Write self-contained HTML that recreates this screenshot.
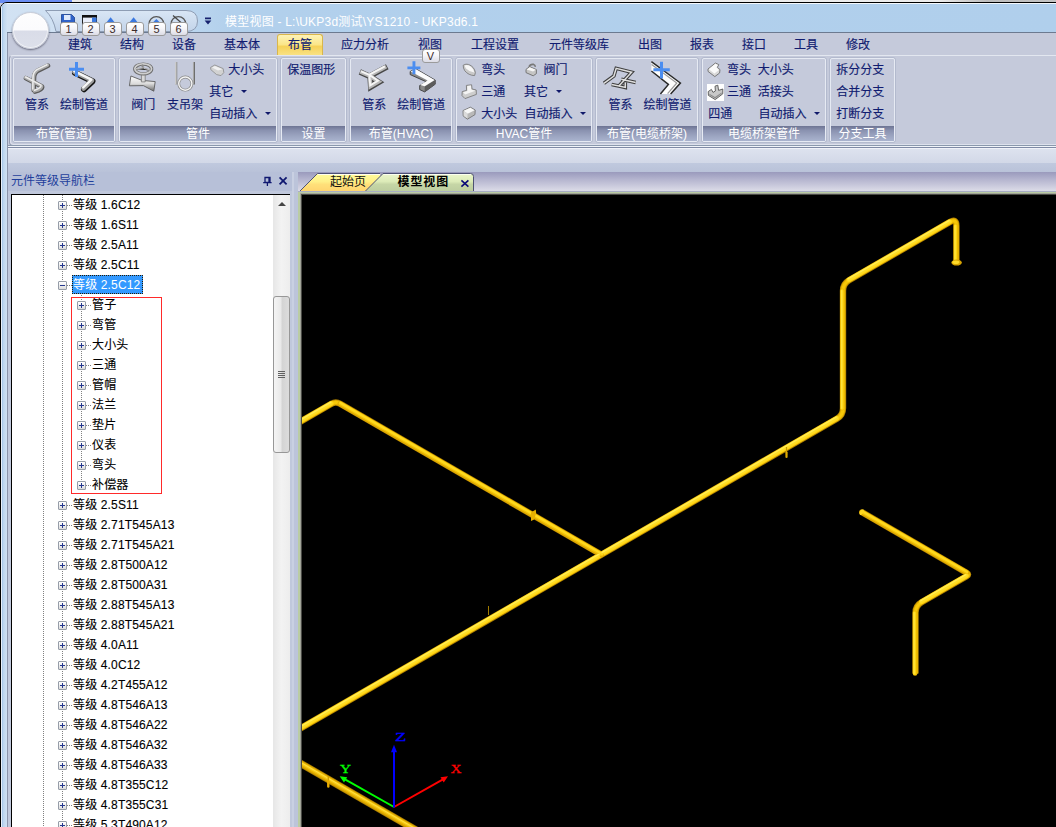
<!DOCTYPE html>
<html lang="zh-CN">
<head>
<meta charset="utf-8">
<title>模型视图 - L:\UKP3d测试\YS1210 - UKP3d6.1</title>
<style>
*{box-sizing:border-box;margin:0;padding:0}
html,body{width:1056px;height:827px;overflow:hidden}
body{position:relative;background:#c5cadb;font-family:"Liberation Sans","Noto Sans CJK SC",sans-serif;font-size:12px;color:#15206b;line-height:1}
.abs{position:absolute}
/* ---------- window chrome ---------- */
#topstripL{left:0;top:0;width:72px;height:3px;background:#6a8df2}
#topstripR{left:72px;top:0;width:984px;height:3px;background:linear-gradient(90deg,#e9e9e9 0,#ececec 88%,#bdbdbd 93%,#c4c4c4 100%)}
#win{left:0;top:2px;width:1070px;height:840px;border:1px solid #000;border-radius:7px 0 0 0;background:#c5cadb;overflow:hidden}
#title{left:0;top:0;width:1070px;height:29px;border-top:1px solid #f4f8fc;background:linear-gradient(90deg,#d2e2f3 0,#cbdef2 120px,#b2d0ec 230px,#b0cfec 100%)}
#titleline{left:0;top:29px;width:1070px;height:1px;background:#6c7a90}
#lb1{left:0;top:0;width:2px;height:840px;background:linear-gradient(90deg,#e8f0fa 0,#e8f0fa 1px,#a9c8e8 1px)}
#lb2{left:2px;top:0;width:4px;height:840px;background:linear-gradient(90deg,#bcd5ee,#d0e1f3)}
#lb3{left:6px;top:30px;width:1px;height:810px;background:#8c96ac}
#ttext{left:225px;top:16px;color:#fff;font-size:12px;white-space:nowrap;letter-spacing:.22px}
/* ---------- ribbon tabs ---------- */
#tabrow{left:8px;top:33px;width:1049px;height:22px;background:#c5cadb}
.rt{position:absolute;top:39px;height:14px;font-size:12px;white-space:nowrap;transform:translateX(-50%);color:#111c70;-webkit-text-stroke:.15px #111c70}
#acttab{left:277px;top:34px;width:46px;height:22px;border:1px solid #d9b64b;border-bottom:none;border-radius:3px 3px 0 0;background:linear-gradient(180deg,#fdf3b7 0,#fbe68a 45%,#f6d259 55%,#f9e388 100%)}
/* ---------- ribbon body ---------- */
#ribframe{left:9px;top:55px;width:1060px;height:91px;border:1px solid #949cb2;border-top-color:#e3e7f0;border-radius:4px 0 0 4px;background:#c5cadb;box-shadow:inset 1px -1px 0 #dde1ec}
#ribline1{left:7px;top:145px;width:1049px;height:1px;background:#8a98ac}
.grp{position:absolute;top:57px;height:86px;border:1px solid #b3bace;border-radius:3px;background:#c5cadb}
.grp:before{content:"";position:absolute;left:0;top:0;right:0;bottom:0;border:1px solid #e6eaf3;border-radius:2px}
.grp .cap{position:absolute;left:1px;right:1px;bottom:1px;height:15px;background:linear-gradient(180deg,#6d7493 0,#8a92b0 30%,#9ba4c0 65%,#a9b3ce 100%);color:#fff;text-align:center;font-size:12px;line-height:17px;white-space:nowrap;overflow:hidden}
.lbl{position:absolute;font-size:12px;white-space:nowrap;color:#111c70;line-height:14px;-webkit-text-stroke:.15px #111c70}
.dd{position:absolute;width:0;height:0;border-left:3px solid transparent;border-right:3px solid transparent;border-top:3.5px solid #10186a}
/* ---------- band under ribbon ---------- */
#band0{left:7px;top:146px;width:1049px;height:1px;background:#f1f4f9}
#band1{left:7px;top:147px;width:1049px;height:1px;background:#7f8aa6}
#band2{left:7px;top:148px;width:1049px;height:1px;background:#f0f2f8}
#band3{left:7px;top:149px;width:1049px;height:14px;background:linear-gradient(180deg,#dde2ee,#d2d8e7)}
#band4{left:7px;top:163px;width:1049px;height:9px;background:linear-gradient(180deg,#c0c9de,#b9c2d9)}
/* ---------- left panel ---------- */
#lpbg{left:7px;top:172px;width:291px;height:660px;background:linear-gradient(90deg,#c0c8dc 0,#c0c8dc 285px,#c9d0e2 285px,#c9d0e2 287px,#bcc4da 287px)}
#phead{left:8px;top:172px;width:284px;height:19px;background:#b7c0d8;color:#1f3f9c;font-size:12px;line-height:19px;padding-left:3px;white-space:nowrap}
#tree{left:11px;top:194px;width:279px;height:640px;background:#fff;border-top:1px solid #000;border-left:1px solid #000;overflow:hidden;color:#000}
.row{position:absolute;height:20px;line-height:20px;font-size:12px;white-space:nowrap;color:#000;letter-spacing:.15px;-webkit-text-stroke:.12px #000}
.pm{position:absolute;width:9px;height:9px;border:1px solid #969da8;border-radius:1px;background:linear-gradient(180deg,#fff,#dcdcdc)}
.pm:before{content:"";position:absolute;left:1px;top:3px;width:5px;height:1px;background:#24388f}
.pm.plus:after{content:"";position:absolute;left:3px;top:1px;width:1px;height:5px;background:#24388f}
.vdot{position:absolute;width:1px;background-image:linear-gradient(180deg,#808080 50%,transparent 50%);background-size:1px 2px}
.hdot{position:absolute;height:1px;background-image:linear-gradient(90deg,#808080 50%,transparent 50%);background-size:2px 1px}
.sel{position:absolute;width:71px;height:19px;background:#3399ff;border:1px dotted #2a1a00}
.selt{color:#fff;-webkit-text-stroke:0 transparent}
.redbox{position:absolute;width:91px;height:197px;border:1px solid #ff2a2a}
#sb{position:absolute;left:261px;top:0;width:17px;height:640px;background:linear-gradient(90deg,#e6e6e6,#f3f3f3 50%,#ededed)}
#sbup{position:absolute;left:5px;top:7px;width:0;height:0;border-left:4px solid transparent;border-right:4px solid transparent;border-bottom:4px solid #444}
#sbthumb{position:absolute;left:0;top:101px;width:17px;height:157px;border:1px solid #979797;border-radius:3px;background:linear-gradient(90deg,#f4f4f4 0,#e9e9e9 45%,#d4d4d4 55%,#dcdcdc 100%)}
#sbthumb i{position:absolute;left:4px;top:74px;width:7px;height:7px;background:linear-gradient(180deg,#606060 0,#606060 1px,transparent 1px,transparent 2px,#606060 2px,#606060 3px,transparent 3px,transparent 4px,#606060 4px,#606060 5px,transparent 5px,transparent 6px,#606060 6px)}
#orb{left:12px;top:12px;width:37px;height:37px;border-radius:50%;background:linear-gradient(180deg,#fdfdfe 0,#fbfbfd 49%,#d9dce8 51%,#dde0ea 100%);border:1px solid #c9cdd8;box-shadow:0 1px 2px rgba(70,70,90,.75),0 0 0 1px rgba(255,255,255,.6) inset}
.kt{position:absolute;width:18px;height:14px;border:1px solid #9b9b9b;border-radius:3px;background:linear-gradient(180deg,#ffffff 0,#f6f6f9 45%,#dcdce6 100%);color:#3c2a2a;font-size:11px;line-height:12px;text-align:center}
.dtab{font-size:12px;line-height:15px;color:#111;white-space:nowrap}
/* ---------- doc area ---------- */
#tabstrip{left:298px;top:172px;width:760px;height:19px;background:linear-gradient(180deg,#9a9abc 0,#b5b5cf 40%,#dcdce8 100%)}
#docborder{left:298px;top:191px;width:760px;height:640px;background:#bacca3;border-top:1px solid #a9aec4}
#viewb{left:300px;top:193px;width:760px;height:640px;background:#a2a498}
#view{left:301px;top:194px;width:760px;height:640px;background:#000;border-left:1px solid #4a4b46;border-top:1px solid #4a4b46}
</style>
</head>
<body>
<div class="abs" id="topstripL"></div>
<div class="abs" id="topstripR"></div>
<div class="abs" id="win">
  <div class="abs" id="title"></div>
  <div class="abs" id="titleline"></div>
  <div class="abs" id="lb1"></div>
  <div class="abs" id="lb2"></div>
  <div class="abs" id="lb3"></div>
</div>
<div class="abs" id="ttext">模型视图 - L:\UKP3d测试\YS1210 - UKP3d6.1</div>

<!-- RIBBON TABS -->
<div class="abs" id="tabrow"></div>
<div class="abs" id="acttab"></div>
<div class="rt" style="left:80px">建筑</div>
<div class="rt" style="left:132px">结构</div>
<div class="rt" style="left:184px">设备</div>
<div class="rt" style="left:242px">基本体</div>
<div class="rt" style="left:300px">布管</div>
<div class="rt" style="left:365px">应力分析</div>
<div class="rt" style="left:430px">视图</div>
<div class="rt" style="left:495px">工程设置</div>
<div class="rt" style="left:579px">元件等级库</div>
<div class="rt" style="left:650px">出图</div>
<div class="rt" style="left:702px">报表</div>
<div class="rt" style="left:754px">接口</div>
<div class="rt" style="left:806px">工具</div>
<div class="rt" style="left:858px">修改</div>

<!-- RIBBON BODY -->
<div class="abs" id="ribframe"></div>
<div class="grp" style="left:12px;width:104px"><div class="cap">布管(管道)</div></div>
<div class="grp" style="left:118px;width:160px"><div class="cap">管件</div></div>
<div class="grp" style="left:280px;width:67px"><div class="cap">设置</div></div>
<div class="grp" style="left:349px;width:104px"><div class="cap">布管(HVAC)</div></div>
<div class="grp" style="left:455px;width:138px"><div class="cap">HVAC管件</div></div>
<div class="grp" style="left:595px;width:104px"><div class="cap">布管(电缆桥架)</div></div>
<div class="grp" style="left:701px;width:126px"><div class="cap">电缆桥架管件</div></div>
<div class="grp" style="left:829px;width:67px"><div class="cap">分支工具</div></div>
<div class="lbl" style="left:37.0px;top:97.6px;transform:translateX(-50%)">管系</div>
<div class="lbl" style="left:84.0px;top:97.6px;transform:translateX(-50%)">绘制管道</div>
<svg class="abs" style="left:22px;top:60px" width="30" height="34" viewBox="0 0 30 34"><g fill="none" stroke-linecap="round" stroke-linejoin="round"><path d="M25.5 5.2 L15.5 10 Q11.5 12.5 11.5 17.5 L11.2 29.5 M3.5 17.6 L19.5 26 Q20.5 28.5 12.5 31" stroke="#5a5a5a" stroke-width="4.6" transform="translate(.5 .6)"/><path d="M25.5 5.2 L15.5 10 Q11.5 12.5 11.5 17.5 L11.2 29.5 M3.5 17.6 L19.5 26 Q20.5 28.5 12.5 31" stroke="#ababab" stroke-width="3.4"/><path d="M25 4.8 L15 9.6 Q11 12.2 11 17.2 L10.8 29 M3.6 17 L19 25.2 Q19.8 27.6 12.6 30.2" stroke="#ececec" stroke-width="1.5"/></g></svg>
<svg class="abs" style="left:66px;top:60px" width="34" height="34" viewBox="0 0 34 34"><g fill="none" stroke-linecap="round" stroke-linejoin="round"><path d="M8.5 12 L26 20.5 L17.5 28.5" stroke="#141414" stroke-width="6" transform="translate(.5 .7)"/><path d="M8.5 12 L26 20.5 L17.5 28.5" stroke="#9c9c9c" stroke-width="4.6"/><path d="M8.3 11.2 L25.4 19.6 L17.2 27.4" stroke="#f6f6f6" stroke-width="2.4"/></g><path d="M3 7.8h15v3h-15z M9 2h3v15h-3z" fill="#4b8df0"/></svg>
<div class="lbl" style="left:143.2px;top:97.6px;transform:translateX(-50%)">阀门</div>
<div class="lbl" style="left:185.0px;top:97.6px;transform:translateX(-50%)">支吊架</div>
<svg class="abs" style="left:127px;top:60px" width="32" height="34" viewBox="0 0 32 34"><defs><linearGradient id="vg" x1="0" y1="0" x2="0" y2="1"><stop offset="0" stop-color="#ffffff"/><stop offset=".5" stop-color="#dcdcdc"/><stop offset="1" stop-color="#6c6c6c"/></linearGradient></defs><path d="M3.9 16 L15.2 20.4 L28.2 21.6 L26.8 31.2 L16.4 25.6 L2.4 25.8 Z" fill="url(#vg)" stroke="#5e5e5e" stroke-width=".9"/><path d="M14.4 13.5 v8.4 h3.8 v-8.4z" fill="#d9d9d9" stroke="#6a6a6a" stroke-width=".7"/><ellipse cx="16.2" cy="9" rx="8.4" ry="4.9" fill="none" stroke="#6f6f6f" stroke-width="3.4"/><ellipse cx="16.2" cy="8.7" rx="8.4" ry="4.9" fill="none" stroke="#cfcfcf" stroke-width="1.7"/><path d="M9 9 L16.2 8.4 L23.4 10.4 M16.2 8.4 L15 4.6" stroke="#8a8a8a" stroke-width="2"/><path d="M9 8.7 L16.2 8.1 L23.4 10.1" stroke="#dedede" stroke-width=".8"/></svg>
<svg class="abs" style="left:172px;top:60px" width="28" height="34" viewBox="0 0 28 34"><path d="M4.2 2 V24.5" stroke="#8c8c8c" stroke-width="2.2" fill="none"/><path d="M3.8 2 V24.5" stroke="#e4e4e4" stroke-width="1" fill="none"/><path d="M22 2 V24.5" stroke="#6e6e6e" stroke-width="2" fill="none"/><path d="M21.4 2 V24.5" stroke="#bdbdbd" stroke-width=".8" fill="none"/><circle cx="13.3" cy="23.6" r="6.6" fill="none" stroke="#8a8a8a" stroke-width="2.8"/><circle cx="13.3" cy="23.6" r="6.6" fill="none" stroke="#f4f4f4" stroke-width="1.4"/></svg>
<svg class="abs" style="left:209px;top:63px" width="17" height="15" viewBox="0 0 17 15"><path d="M1.6 4.4 L5.8 2 L14.2 5.6 L14.8 9.6 L12 12.6 L7.6 11.6 L1.8 6.6Z" fill="#d2d2d2" stroke="#8b8b8b" stroke-width=".8"/><path d="M3 4.6 L6 3 L13.4 6.2 L9 7.4Z" fill="#f1f1f1"/></svg>
<div class="lbl" style="left:228.2px;top:63.4px">大小头</div>
<div class="lbl" style="left:209.2px;top:85.2px">其它</div>
<div class="dd" style="left:241.0px;top:90.1px"></div>
<div class="lbl" style="left:209.2px;top:107.2px">自动插入</div>
<div class="dd" style="left:264.8px;top:112.1px"></div>
<div class="lbl" style="left:287.3px;top:63.4px">保温图形</div>
<div class="lbl" style="left:374.2px;top:97.6px;transform:translateX(-50%)">管系</div>
<div class="lbl" style="left:421.2px;top:97.6px;transform:translateX(-50%)">绘制管道</div>
<svg class="abs" style="left:357px;top:60px" width="34" height="34" viewBox="0 0 34 34"><g fill="none" stroke-linecap="square" stroke-linejoin="miter"><path d="M27.4 7.4 L13 15.2 M5 12.4 L13 16 L21.6 21.6 L13.4 26.4 L12.8 16.4" stroke="#484848" stroke-width="5.6" transform="translate(.4 .6)"/><path d="M27.4 7.4 L13 15.2 M5 12.4 L13 16 L21.6 21.6 L13.4 26.4 L12.8 16.4" stroke="#b8b8b8" stroke-width="4"/><path d="M27 6.8 L12.8 14.4 M5 11.8 L12.8 15.2 L21 20.8 L13.2 25.4 L12.4 15.8" stroke="#f5f5f5" stroke-width="1.9"/></g></svg>
<svg class="abs" style="left:404px;top:60px" width="36" height="34" viewBox="0 0 36 34"><path d="M6.2 11.5 L11.6 8.7 L31.2 20.1 L31.2 24.2 L20.7 31.9 L15.7 29.6 L15.7 25.5 L22.5 21.9 L6.2 14.6Z" fill="#8a8a8a" stroke="#3a3a3a" stroke-width=".9"/><path d="M20.7 26.5 L31.2 20.1 L31.2 24.2 L20.7 31.9Z" fill="#5c5c5c"/><path d="M6.6 11.6 L11.6 9.1 L30.6 20.1 L20.7 26.2 L16.2 24.9 L23.6 20.6Z" fill="#fcfcfc"/><path d="M3.4 6.4h13v2.8h-13z M8.5 1.2h2.9v13h-2.9z" fill="#4b8df0"/></svg>
<svg class="abs" style="left:462px;top:63px" width="16" height="15" viewBox="0 0 16 15"><path d="M1.2 2.2 Q4 .6 6.4 1.4 Q12.4 3.6 13.4 9.6 L12.6 12.6 Q6.6 12.4 2.8 7.8 Q1 5 1.2 2.2Z" fill="#c9c9c9" stroke="#7d7d7d" stroke-width=".9"/><path d="M2.4 2.6 Q5 1.6 7 2.6 Q11.6 5 12.2 9.6 Q7 8.8 4 5.6Z" fill="#f7f7f7"/></svg>
<div class="lbl" style="left:481.2px;top:63.4px">弯头</div>
<svg class="abs" style="left:524px;top:63px" width="16" height="15" viewBox="0 0 16 15"><path d="M2 6.4 L5.6 3.6 L12.4 6.6 L12.4 10.6 L9.2 12.8 L2 9.6Z" fill="#c4c4c4" stroke="#6e6e6e" stroke-width=".9"/><path d="M2.6 6.4 L5.8 4.2 L11.8 6.8 L9 8.6Z" fill="#f6f6f6"/><path d="M5 3.8 Q6 1 9.6 1.4 Q11.4 2 11.2 3.8" fill="none" stroke="#777" stroke-width="1.6"/></svg>
<div class="lbl" style="left:543.5px;top:63.4px">阀门</div>
<svg class="abs" style="left:461px;top:84px" width="18" height="16" viewBox="0 0 18 16"><path d="M5.4 1.4 L10.6 .8 L11 5 L15.2 6 L15.4 10.4 L4 14.6 L1 11.6 L1.2 7.6 L5.6 6.4Z" fill="#cdcdcd" stroke="#7c7c7c" stroke-width=".9"/><path d="M6.2 2 L10 1.6 L10.2 5.6 L14.4 6.8 L4.2 10.6 L2 8.2 L6.4 7Z" fill="#f4f4f4"/></svg>
<div class="lbl" style="left:481.2px;top:85.2px">三通</div>
<div class="lbl" style="left:524.0px;top:85.2px">其它</div>
<div class="dd" style="left:555.6px;top:90.1px"></div>
<svg class="abs" style="left:462px;top:106px" width="16" height="15" viewBox="0 0 16 15"><path d="M1 4.6 L8.4 1.2 L13.2 4 L13 8.6 L5.4 13.2 L1.2 10Z" fill="#b9b9b9" stroke="#767676" stroke-width=".9"/><path d="M1.6 4.8 L8.4 1.8 L12.6 4.2 L5.6 7.8Z" fill="#f8f8f8"/><path d="M5.6 7.8 L5.4 12.6 L1.6 9.8 L1.6 4.8Z" fill="#dcdcdc"/></svg>
<div class="lbl" style="left:481.2px;top:107.2px">大小头</div>
<div class="lbl" style="left:524.6px;top:107.2px">自动插入</div>
<div class="dd" style="left:579.6px;top:112.1px"></div>
<div class="lbl" style="left:620.4px;top:97.6px;transform:translateX(-50%)">管系</div>
<div class="lbl" style="left:667.4px;top:97.6px;transform:translateX(-50%)">绘制管道</div>
<svg class="abs" style="left:602px;top:60px" width="38" height="34" viewBox="0 0 38 34"><g fill="none" stroke-linejoin="miter" stroke-linecap="butt"><path d="M1.9 23.3 L11.9 16 L14.2 8.3 L29.6 12.2 L16.9 26 L9.6 24.6 M19.2 19.2 L33.7 22.4 M16.9 26 L23.3 27.4 L23.3 22.6" stroke="#3e3e3e" stroke-width="3.6"/><path d="M1.9 23.3 L11.9 16 L14.2 8.3 L29.6 12.2 L16.9 26 L9.6 24.6 M19.2 19.2 L33.7 22.4 M16.9 26 L23.3 27.4 L23.3 22.6" stroke="#dedede" stroke-width="1.5"/></g></svg>
<svg class="abs" style="left:648px;top:60px" width="36" height="36" viewBox="0 0 36 36"><path d="M3.4 1.6 L32.4 23 L22.6 34 L12.4 34 L20.4 24.4 L3.4 11Z" fill="#fdfdfd"/><path d="M3.4 1.6 L32.4 23 L22.6 34 M12.4 34 L20.4 24.4 L3.4 11" fill="none" stroke="#2a2a2a" stroke-width="1.5"/><path d="M3.6 4.4 L28.8 23 L19.6 33.6" fill="none" stroke="#9a9a9a" stroke-width="1.2"/><path d="M5.4 8.2h16.4v3h-16.4z M12 1.8h3v16.6h-3z" fill="#4b8df0"/></svg>
<svg class="abs" style="left:707px;top:62px" width="15" height="16" viewBox="0 0 15 16"><path d="M1 7 L8.4 1 L11.8 2.6 L10.4 5.4 L13 7.6 L12.6 11 L7.8 14.6 L1 9.4Z" fill="#d9d9d9" stroke="#6f6f6f" stroke-width=".9"/><path d="M1.8 7.2 L8.4 1.8 L10.8 3 L9.4 5.6 L12 8 L7.4 11.4Z" fill="#fafafa"/></svg>
<div class="lbl" style="left:727.0px;top:63.4px">弯头</div>
<div class="lbl" style="left:757.8px;top:63.4px">大小头</div>
<svg class="abs" style="left:707px;top:84px" width="17" height="17" viewBox="0 0 17 17"><rect x="0" y="0" width="17" height="17" fill="#fff"/><path d="M1.2 7.6 L4.4 5.4 L6 8.4 L8.4 7 L8 2.2 L10.8 1.2 L11.6 6.4 L15.8 5 L15.8 9.8 L8.2 15.6 L1.4 11.4Z" fill="#c8c8c8" stroke="#555" stroke-width=".9"/><path d="M2.4 9.8 L8 13 L14.6 8.4 L14.8 9.6 L8.2 14.4 L2.4 11Z" fill="#8a8a8a"/></svg>
<div class="lbl" style="left:727.0px;top:85.2px">三通</div>
<div class="lbl" style="left:757.8px;top:85.2px">活接头</div>
<div class="lbl" style="left:708.2px;top:107.2px">四通</div>
<div class="lbl" style="left:758.4px;top:107.2px">自动插入</div>
<div class="dd" style="left:813.6px;top:112.1px"></div>
<div class="lbl" style="left:836.2px;top:63.4px">拆分分支</div>
<div class="lbl" style="left:836.2px;top:85.2px">合并分支</div>
<div class="lbl" style="left:836.2px;top:107.2px">打断分支</div>

<div class="abs" id="ribline1"></div>
<div class="abs" id="band0"></div>
<div class="abs" id="band1"></div>
<div class="abs" id="band2"></div>
<div class="abs" id="band3"></div>
<div class="abs" id="band4"></div>

<!-- LEFT PANEL -->
<div class="abs" id="lpbg"></div>
<div class="abs" id="phead">元件等级导航栏</div>
<div class="abs" id="tree">
<div class="vdot" style="left:31px;top:0;height:640px"></div>
<div class="vdot" style="left:50px;top:0;height:640px"></div>
<div class="vdot" style="left:69px;top:100px;height:190px"></div>
<div class="hdot" style="left:55px;top:10px;width:6px"></div>
<div class="pm plus" style="left:46px;top:6px"></div>
<div class="row" style="left:61px;top:0px">等级 1.6C12</div>
<div class="hdot" style="left:55px;top:30px;width:6px"></div>
<div class="pm plus" style="left:46px;top:26px"></div>
<div class="row" style="left:61px;top:20px">等级 1.6S11</div>
<div class="hdot" style="left:55px;top:50px;width:6px"></div>
<div class="pm plus" style="left:46px;top:46px"></div>
<div class="row" style="left:61px;top:40px">等级 2.5A11</div>
<div class="hdot" style="left:55px;top:70px;width:6px"></div>
<div class="pm plus" style="left:46px;top:66px"></div>
<div class="row" style="left:61px;top:60px">等级 2.5C11</div>
<div class="hdot" style="left:55px;top:90px;width:6px"></div>
<div class="pm " style="left:46px;top:86px"></div>
<div class="sel" style="left:60px;top:80px"></div>
<div class="row selt" style="left:61px;top:80px">等级 2.5C12</div>
<div class="hdot" style="left:74px;top:110px;width:6px"></div>
<div class="pm plus" style="left:65px;top:106px"></div>
<div class="row" style="left:80px;top:100px">管子</div>
<div class="hdot" style="left:74px;top:130px;width:6px"></div>
<div class="pm plus" style="left:65px;top:126px"></div>
<div class="row" style="left:80px;top:120px">弯管</div>
<div class="hdot" style="left:74px;top:150px;width:6px"></div>
<div class="pm plus" style="left:65px;top:146px"></div>
<div class="row" style="left:80px;top:140px">大小头</div>
<div class="hdot" style="left:74px;top:170px;width:6px"></div>
<div class="pm plus" style="left:65px;top:166px"></div>
<div class="row" style="left:80px;top:160px">三通</div>
<div class="hdot" style="left:74px;top:190px;width:6px"></div>
<div class="pm plus" style="left:65px;top:186px"></div>
<div class="row" style="left:80px;top:180px">管帽</div>
<div class="hdot" style="left:74px;top:210px;width:6px"></div>
<div class="pm plus" style="left:65px;top:206px"></div>
<div class="row" style="left:80px;top:200px">法兰</div>
<div class="hdot" style="left:74px;top:230px;width:6px"></div>
<div class="pm plus" style="left:65px;top:226px"></div>
<div class="row" style="left:80px;top:220px">垫片</div>
<div class="hdot" style="left:74px;top:250px;width:6px"></div>
<div class="pm plus" style="left:65px;top:246px"></div>
<div class="row" style="left:80px;top:240px">仪表</div>
<div class="hdot" style="left:74px;top:270px;width:6px"></div>
<div class="pm plus" style="left:65px;top:266px"></div>
<div class="row" style="left:80px;top:260px">弯头</div>
<div class="hdot" style="left:74px;top:290px;width:6px"></div>
<div class="pm plus" style="left:65px;top:286px"></div>
<div class="row" style="left:80px;top:280px">补偿器</div>
<div class="hdot" style="left:55px;top:310px;width:6px"></div>
<div class="pm plus" style="left:46px;top:306px"></div>
<div class="row" style="left:61px;top:300px">等级 2.5S11</div>
<div class="hdot" style="left:55px;top:330px;width:6px"></div>
<div class="pm plus" style="left:46px;top:326px"></div>
<div class="row" style="left:61px;top:320px">等级 2.71T545A13</div>
<div class="hdot" style="left:55px;top:350px;width:6px"></div>
<div class="pm plus" style="left:46px;top:346px"></div>
<div class="row" style="left:61px;top:340px">等级 2.71T545A21</div>
<div class="hdot" style="left:55px;top:370px;width:6px"></div>
<div class="pm plus" style="left:46px;top:366px"></div>
<div class="row" style="left:61px;top:360px">等级 2.8T500A12</div>
<div class="hdot" style="left:55px;top:390px;width:6px"></div>
<div class="pm plus" style="left:46px;top:386px"></div>
<div class="row" style="left:61px;top:380px">等级 2.8T500A31</div>
<div class="hdot" style="left:55px;top:410px;width:6px"></div>
<div class="pm plus" style="left:46px;top:406px"></div>
<div class="row" style="left:61px;top:400px">等级 2.88T545A13</div>
<div class="hdot" style="left:55px;top:430px;width:6px"></div>
<div class="pm plus" style="left:46px;top:426px"></div>
<div class="row" style="left:61px;top:420px">等级 2.88T545A21</div>
<div class="hdot" style="left:55px;top:450px;width:6px"></div>
<div class="pm plus" style="left:46px;top:446px"></div>
<div class="row" style="left:61px;top:440px">等级 4.0A11</div>
<div class="hdot" style="left:55px;top:470px;width:6px"></div>
<div class="pm plus" style="left:46px;top:466px"></div>
<div class="row" style="left:61px;top:460px">等级 4.0C12</div>
<div class="hdot" style="left:55px;top:490px;width:6px"></div>
<div class="pm plus" style="left:46px;top:486px"></div>
<div class="row" style="left:61px;top:480px">等级 4.2T455A12</div>
<div class="hdot" style="left:55px;top:510px;width:6px"></div>
<div class="pm plus" style="left:46px;top:506px"></div>
<div class="row" style="left:61px;top:500px">等级 4.8T546A13</div>
<div class="hdot" style="left:55px;top:530px;width:6px"></div>
<div class="pm plus" style="left:46px;top:526px"></div>
<div class="row" style="left:61px;top:520px">等级 4.8T546A22</div>
<div class="hdot" style="left:55px;top:550px;width:6px"></div>
<div class="pm plus" style="left:46px;top:546px"></div>
<div class="row" style="left:61px;top:540px">等级 4.8T546A32</div>
<div class="hdot" style="left:55px;top:570px;width:6px"></div>
<div class="pm plus" style="left:46px;top:566px"></div>
<div class="row" style="left:61px;top:560px">等级 4.8T546A33</div>
<div class="hdot" style="left:55px;top:590px;width:6px"></div>
<div class="pm plus" style="left:46px;top:586px"></div>
<div class="row" style="left:61px;top:580px">等级 4.8T355C12</div>
<div class="hdot" style="left:55px;top:610px;width:6px"></div>
<div class="pm plus" style="left:46px;top:606px"></div>
<div class="row" style="left:61px;top:600px">等级 4.8T355C31</div>
<div class="hdot" style="left:55px;top:630px;width:6px"></div>
<div class="pm plus" style="left:46px;top:626px"></div>
<div class="row" style="left:61px;top:620px">等级 5.3T490A12</div>
<div class="redbox" style="left:59px;top:102px"></div>
<div id="sb"><div id="sbup"></div><div id="sbthumb"><i></i></div></div>
</div>

<!-- DOC AREA -->
<div class="abs" id="tabstrip"></div>
<svg class="abs" style="left:298px;top:172px" width="200" height="20" viewBox="0 0 200 20">
  <defs>
    <linearGradient id="t1" x1="0" y1="0" x2="0" y2="1"><stop offset="0" stop-color="#fffc9c"/><stop offset=".45" stop-color="#fff088"/><stop offset=".6" stop-color="#ffe07a"/><stop offset="1" stop-color="#ffd46e"/></linearGradient>
    <linearGradient id="t2" x1="0" y1="0" x2="0" y2="1"><stop offset="0" stop-color="#ecf6cc"/><stop offset=".45" stop-color="#dcebb8"/><stop offset=".6" stop-color="#c6d6a6"/><stop offset="1" stop-color="#bccd9f"/></linearGradient>
  </defs>
  <path d="M1.5 19.5 L19.5 1.5 H82 L86 19.5Z" fill="url(#t1)"/>
  <path d="M20 2.5 H82" fill="none" stroke="#fffef0" stroke-width="1"/>
  <path d="M1.5 19.5 L19.5 1.5 H82" fill="none" stroke="#4e5274" stroke-width="1"/>
  <path d="M67 19.5 L85 1.5 H172.5 Q175.5 1.5 175.5 4.5 V19.5Z" fill="url(#t2)"/>
  <path d="M85.5 2.5 H173" fill="none" stroke="#fbfff0" stroke-width="1"/>
  <path d="M67 19.5 L85 1.5 H172.5 Q175.5 1.5 175.5 4.5 V19.5" fill="none" stroke="#4e5274" stroke-width="1"/>
  <path d="M163.4 8.3 l7 6.4 m0 -6.4 l-7 6.4" stroke="#0a0a78" stroke-width="1.6" fill="none"/>
</svg>
<div class="abs dtab" style="left:330px;top:175px">起始页</div>
<div class="abs dtab" style="left:397.5px;top:175px;font-weight:bold;color:#000;letter-spacing:.9px">模型视图</div>
<svg class="abs" style="left:260px;top:174px" width="30" height="14" viewBox="0 0 30 14">
  <path d="M5 3.5h5v5h-5z M3.2 8.6h8.4 M7.4 8.6v3.4 M9 3.5v5" stroke="#101870" stroke-width="1.3" fill="none"/>
  <path d="M19.6 3.4 l7 7 m0 -7 l-7 7" stroke="#101870" stroke-width="1.8" fill="none"/>
</svg>

<div class="abs" id="docborder"></div>
<div class="abs" id="viewb"></div>
<div class="abs" id="view">
<svg width="754" height="633" viewBox="0 0 754 633" style="position:absolute;left:0;top:0">
<g fill="none" stroke-linejoin="round" stroke-linecap="butt">
<path d="M654.40 67.00 L654.40 30.80 Q654.40 23.30 647.90 27.05 L547.06 85.20 Q541.00 88.70 541.00 95.70 L541.00 213.20 Q541.00 220.20 534.94 223.70 L-12.00 539.47" stroke="#a87c00" stroke-width="6.4"/>
<path d="M299.50 359.74 L38.13 208.80 Q33.80 206.30 29.47 208.80 L-12.00 232.74" stroke="#a87c00" stroke-width="6.4"/>
<path d="M559.60 317.09 L664.57 377.70 Q667.60 379.45 664.57 381.20 L619.56 407.20 Q613.50 410.70 613.50 417.70 L613.50 478.50" stroke="#a87c00" stroke-width="6.4"/>
<path d="M654.40 67.00 L654.40 30.80 Q654.40 23.30 647.90 27.05 L547.06 85.20 Q541.00 88.70 541.00 95.70 L541.00 213.20 Q541.00 220.20 534.94 223.70 L-12.00 539.47" stroke="#e4b000" stroke-width="5"/>
<path d="M299.50 359.74 L38.13 208.80 Q33.80 206.30 29.47 208.80 L-12.00 232.74" stroke="#e4b000" stroke-width="5"/>
<path d="M559.60 317.09 L664.57 377.70 Q667.60 379.45 664.57 381.20 L619.56 407.20 Q613.50 410.70 613.50 417.70 L613.50 478.50" stroke="#e4b000" stroke-width="5"/>
<path d="M654.40 67.00 L654.40 30.80 Q654.40 23.30 647.90 27.05 L547.06 85.20 Q541.00 88.70 541.00 95.70 L541.00 213.20 Q541.00 220.20 534.94 223.70 L-12.00 539.47" stroke="#f6c808" stroke-width="3"/>
<path d="M299.50 359.74 L38.13 208.80 Q33.80 206.30 29.47 208.80 L-12.00 232.74" stroke="#f6c808" stroke-width="3"/>
<path d="M559.60 317.09 L664.57 377.70 Q667.60 379.45 664.57 381.20 L619.56 407.20 Q613.50 410.70 613.50 417.70 L613.50 478.50" stroke="#f6c808" stroke-width="3"/>
</g>
<g fill="none" stroke-linecap="round">
<line x1="654.00" y1="67.00" x2="654.00" y2="30.80" stroke="#eebc00" stroke-width="4.6"/>
<line x1="647.70" y1="26.70" x2="546.86" y2="84.85" stroke="#ffd414" stroke-width="4.8"/>
<line x1="540.60" y1="95.70" x2="540.60" y2="213.20" stroke="#eebc00" stroke-width="4.6"/>
<line x1="534.74" y1="223.35" x2="-12.20" y2="539.12" stroke="#ffd414" stroke-width="4.8"/>
<line x1="299.50" y1="359.74" x2="38.13" y2="208.80" stroke="#dca600" stroke-width="5.0"/>
<line x1="29.27" y1="208.45" x2="-12.20" y2="232.39" stroke="#ffd414" stroke-width="4.8"/>
<line x1="559.60" y1="317.09" x2="664.57" y2="377.70" stroke="#dca600" stroke-width="5.0"/>
<line x1="664.37" y1="380.85" x2="619.36" y2="406.85" stroke="#ffd414" stroke-width="4.8"/>
<line x1="613.10" y1="417.70" x2="613.10" y2="478.50" stroke="#eebc00" stroke-width="4.6"/>
<line x1="653.50" y1="67.00" x2="653.50" y2="30.80" stroke="#ffd614" stroke-width="3.0"/>
<line x1="647.50" y1="26.35" x2="546.66" y2="84.50" stroke="#ffde26" stroke-width="3.2"/>
<line x1="540.10" y1="95.70" x2="540.10" y2="213.20" stroke="#ffd614" stroke-width="3.0"/>
<line x1="534.54" y1="223.00" x2="-12.40" y2="538.77" stroke="#ffde26" stroke-width="3.2"/>
<line x1="299.70" y1="359.29" x2="38.33" y2="208.35" stroke="#f4c408" stroke-width="3.8"/>
<line x1="29.07" y1="208.10" x2="-12.40" y2="232.04" stroke="#ffde26" stroke-width="3.2"/>
<line x1="559.80" y1="316.64" x2="664.77" y2="377.25" stroke="#f4c408" stroke-width="3.8"/>
<line x1="664.17" y1="380.50" x2="619.16" y2="406.50" stroke="#ffde26" stroke-width="3.2"/>
<line x1="612.60" y1="417.70" x2="612.60" y2="478.50" stroke="#ffd614" stroke-width="3.0"/>
<line x1="653.10" y1="67.00" x2="653.10" y2="30.80" stroke="#ffe43c" stroke-width="1.4"/>
<line x1="647.10" y1="25.65" x2="546.26" y2="83.80" stroke="#ffec58" stroke-width="1.3"/>
<line x1="539.70" y1="95.70" x2="539.70" y2="213.20" stroke="#ffe43c" stroke-width="1.4"/>
<line x1="534.14" y1="222.30" x2="-12.80" y2="538.07" stroke="#ffec58" stroke-width="1.3"/>
<line x1="299.90" y1="358.89" x2="38.53" y2="207.95" stroke="#ffda20" stroke-width="2.2"/>
<line x1="28.67" y1="207.40" x2="-12.80" y2="231.34" stroke="#ffec58" stroke-width="1.3"/>
<line x1="560.00" y1="316.24" x2="664.97" y2="376.85" stroke="#ffda20" stroke-width="2.2"/>
<line x1="663.77" y1="379.80" x2="618.76" y2="405.80" stroke="#ffec58" stroke-width="1.3"/>
<line x1="612.20" y1="417.70" x2="612.20" y2="478.50" stroke="#ffe43c" stroke-width="1.4"/>
</g>
<polyline points="-12.0,562.3 138.0,648.9" fill="none" stroke="#9c7400" stroke-width="7.4" transform="translate(0 0)"/>
<polyline points="-12.0,562.3 138.0,648.9" fill="none" stroke="#d09c00" stroke-width="6.2" transform="translate(0 0)"/>
<polyline points="-12.0,562.3 138.0,648.9" fill="none" stroke="#e8b400" stroke-width="4.4" transform="translate(0.1 -0.3)"/>
<polyline points="-12.0,562.3 138.0,648.9" fill="none" stroke="#f8cc1c" stroke-width="2.4" transform="translate(0.2 -0.6)"/>
<polyline points="-12.0,562.3 138.0,648.9" fill="none" stroke="#ffe040" stroke-width="1.0" transform="translate(0.3 -0.9)"/>
<ellipse cx="654.6" cy="67.6" rx="5.2" ry="3" fill="#d8a400"/>
<ellipse cx="653.8" cy="67.2" rx="3.6" ry="1.8" fill="#ffda28"/>
<ellipse cx="559.6" cy="317.1" rx="1.6" ry="3.1" fill="#ffd820" transform="rotate(30 559.6 317.1)"/>
<path d="M484.5 252.0v8" stroke="#c89a00" stroke-width="1.2" fill="none"/>
<path d="M484.5 257.5v4.5" stroke="#e0ac00" stroke-width="2.2" stroke-linecap="round" fill="none"/>
<polygon points="229.0,317.4 233.8,314.6 234.1,318.3 232.1,324.5 229.0,326.0" fill="#e6b000"/>
<path d="M186.5 411.0v9" stroke="#a07c00" stroke-width="1" fill="none"/>
<path d="M26.3 581.0v10" stroke="#d09c00" stroke-width="1.3" fill="none"/>
<path d="M26.3 586.5v5" stroke="#e8ac00" stroke-width="2.4" stroke-linecap="round" fill="none"/>
<g stroke-width="2" fill="none">
<line x1="92.0" y1="612.0" x2="43.0" y2="584.3" stroke="#00ff00"/>
<line x1="92.0" y1="612.0" x2="141.0" y2="584.3" stroke="#ff0000"/>
<line x1="92.0" y1="612.5" x2="92.0" y2="556.0" stroke="#0000ff"/>
</g>
<path d="M92.0 549.8l-3 7.5h6z" fill="#0000ff"/>
<path d="M146.0 581.2l-7.5 1l3.2 5.2z" fill="#ff0000"/>
<path d="M37.7 581.2l7.5 1l-3.2 5.2z" fill="#00ff00"/>
<g font-family="'Liberation Serif',serif" font-size="12" lengthAdjust="spacingAndGlyphs" stroke-width=".3">
<text x="92.9" y="546.3" textLength="11.3" lengthAdjust="spacingAndGlyphs" fill="#0000ff" stroke="#0000ff">Z</text>
<text x="148.8" y="578.0" textLength="10.6" lengthAdjust="spacingAndGlyphs" fill="#ff0000" stroke="#ff0000">X</text>
<text x="37.9" y="578.0" textLength="11" lengthAdjust="spacingAndGlyphs" fill="#00ff00" stroke="#00ff00">Y</text>
</g>
</svg>
</div>
<!-- quick access toolbar -->
<svg class="abs" style="left:40px;top:6px" width="180" height="30" viewBox="0 0 180 30">
  <defs><linearGradient id="qg" x1="0" y1="0" x2="0" y2="1"><stop offset="0" stop-color="#d9e6f5"/><stop offset="1" stop-color="#c3d4ea"/></linearGradient></defs>
  <path d="M5.5 4.5 H146 Q157.5 4.5 157.5 15 Q157.5 25.5 146 25.5 H16 Q13.5 12 5.5 4.5Z" fill="url(#qg)" stroke="#8e9db4" stroke-width="1"/>
  <!-- save -->
  <path d="M21.5 8.5h10l3 3v10h-13z" fill="#2f62c8" stroke="#1c3f8e" stroke-width=".8"/><rect x="24" y="9" width="6.5" height="5" fill="#dfe9fb"/>
  <!-- save all -->
  <rect x="42.5" y="9.5" width="14" height="12" fill="#e9eefa" stroke="#222" stroke-width="1"/><rect x="42" y="9" width="15" height="2.6" fill="#111"/><rect x="52" y="11.6" width="4.5" height="10" fill="#3a78e0"/>
  <!-- two blue arrows -->
  <path d="M66 17 L70.6 11.2 L75.2 17Z" fill="#3a78e0"/><path d="M89 17 L93.6 11.2 L98.2 17Z" fill="#3a78e0"/>
  <!-- circles -->
  <path d="M109 18 A7.4 7.4 0 0 1 123.8 18" fill="none" stroke="#555" stroke-width="1.2"/><path d="M112.4 17 L116.4 13 L120.4 17Z" fill="#3a78e0"/>
  <path d="M131 18 A7.4 7.4 0 0 1 145.8 18" fill="none" stroke="#555" stroke-width="1.2"/><path d="M133 9.5 L141.5 17" stroke="#444" stroke-width="1.2"/>
  <!-- customize glyph -->
  <path d="M165 11.6h6v1.6h-6z M164.6 14.6h6.8l-3.4 3.8z" fill="#17226e"/>
</svg>
<!-- office button -->
<div class="abs" id="orb"></div>
<!-- key tips -->
<div class="kt" style="left:59.5px;top:21.5px">1</div>
<div class="kt" style="left:81.5px;top:21.5px">2</div>
<div class="kt" style="left:103.5px;top:21.5px">3</div>
<div class="kt" style="left:125.5px;top:21.5px">4</div>
<div class="kt" style="left:147.5px;top:21.5px">5</div>
<div class="kt" style="left:169.5px;top:21.5px">6</div>
<div class="kt" style="left:421.5px;top:48.5px">V</div>

<div class="abs" style="left:7px;top:33px;width:1px;height:800px;background:#8c95ab"></div>
</body>
</html>
